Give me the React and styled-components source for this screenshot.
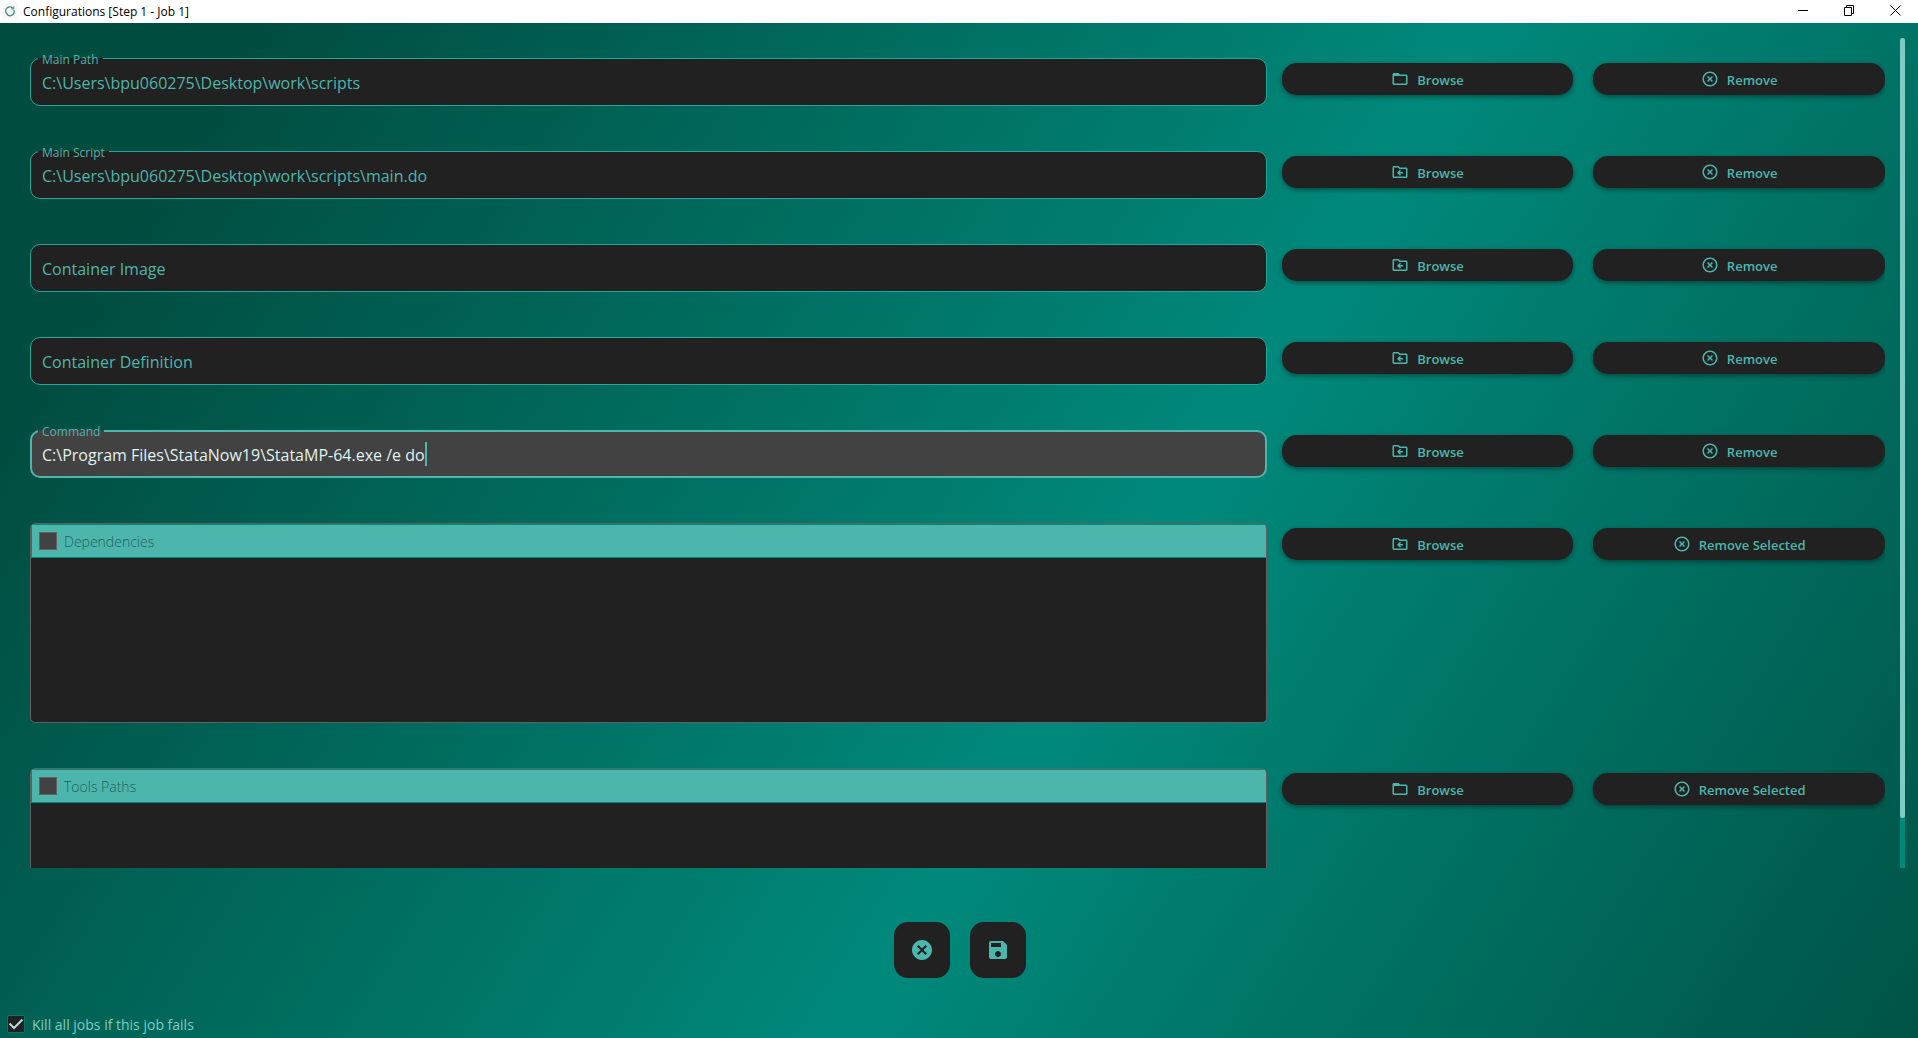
import React, { useState } from 'react';
import styled, { createGlobalStyle } from 'styled-components';
import {
  MdFolderOpen,
  MdOutlineDriveFileMoveRtl,
  MdHighlightOff,
  MdCancel,
  MdSave,
} from 'react-icons/md';

const GlobalStyle = createGlobalStyle`
  * { box-sizing: border-box; }
  body {
    margin: 0;
    font-family: "Open Sans", "Noto Sans", sans-serif;
    background: #004d40;
  }
  button, input { font-family: inherit; }
`;

const Window = styled.div`
  display: flex;
  flex-direction: column;
  height: 100vh;
  overflow: hidden;
`;

const TitleBar = styled.header`
  display: flex;
  align-items: center;
  flex: none;
  height: 23px;
  padding: 0 17px 2px 2px;
  background: #fff;
  color: #000;
`;

const AppIcon = styled.svg`
  width: 16px;
  height: 16px;
  margin-right: 5px;
  background: #f9f9f9;
`;

const Title = styled.h1`
  flex: 1;
  margin: 0;
  padding-top: 2px;
  font-size: 12px;
  line-height: 16px;
  font-weight: 400;
`;

const WindowControls = styled.div`
  display: flex;
  gap: 35px;
`;

const WindowButton = styled.button`
  display: flex;
  padding: 0;
  border: 0;
  background: none;
  color: #000;
`;

const Page = styled.main`
  display: flex;
  flex-direction: column;
  flex: 1;
  min-height: 0;
  padding: 15px 13px 4px 30px;
  background: linear-gradient(122deg, #004d40 10%, #00897b 58%, #004d40 105%);
`;

const ScrollArea = styled.div`
  display: flex;
  flex: 1;
  min-height: 0;
  gap: 15px;
`;

const Rows = styled.div`
  display: flex;
  flex-direction: column;
  flex: 1;
  gap: 45px;
  padding: 20px 0;
  overflow-y: auto;
  scrollbar-width: none;
`;

const Track = styled.div`
  display: flex;
  flex-direction: column;
  flex: none;
  width: 5px;
  background: #00897b;
`;

const Thumb = styled.div`
  flex: 0 0 94%;
  border-radius: 3px;
  background: #80cbc4;
`;

const Row = styled.div`
  display: grid;
  grid-template-columns: 2fr 1fr;
  flex: none;
  align-items: start;
`;

const Actions = styled.div`
  display: grid;
  grid-template-columns: 1fr 1fr;
  gap: 20px;
  padding: 5px 0 0 15px;
`;

const Field = styled.div`
  position: relative;
`;

const FieldInput = styled.input`
  display: block;
  width: 100%;
  height: 48px;
  padding: ${(p) => (p.$focused ? '2px 10px 0' : '2px 11px 0')};
  border: ${(p) => (p.$focused ? '2px solid #4db6ac' : '1px solid #26a69a')};
  border-radius: 10px;
  outline: none;
  background: ${(p) => (p.$focused ? '#424242' : '#212121')};
  color: ${(p) => (p.$focused ? '#e0f2f1' : '#4db6ac')};
  font-size: 16px;
  line-height: 24px;
  &::placeholder { color: #4db6ac; opacity: 1; }
`;

const FieldLabel = styled.label`
  position: absolute;
  top: 0;
  left: 8px;
  padding: 0 4px;
  font-size: 12px;
  line-height: 4px;
  color: #4db6ac;
  background: ${(p) => (p.$focused ? '#424242' : '#212121')};
`;

const Caret = styled.span`
  position: absolute;
  top: 12px;
  left: 12px;
  display: flex;
  height: 24px;
  font-size: 16px;
  pointer-events: none;
  border-right: 2px solid #4db6ac;
`;

const CaretText = styled.span`
  visibility: hidden;
  white-space: pre;
`;

const ActionButton = styled.button`
  display: flex;
  align-items: center;
  justify-content: center;
  gap: 8px;
  height: 32px;
  padding: 0 12px;
  border: 0;
  border-radius: 15px;
  background: #212121;
  color: #4db6ac;
  font-size: 13px;
  line-height: 20px;
  font-weight: 600;
  box-shadow: 0 2px 5px rgba(0, 0, 0, 0.4);
  svg { flex: none; }
`;

const Caption = styled.span`
  padding-top: 2px;
`;

const ListTable = styled.table`
  width: 100%;
  height: 200px;
  border: 1px solid #616161;
  border-radius: 5px;
  border-spacing: 0;
  background: #212121;
  overflow: hidden;
`;

const HeadCell = styled.th`
  height: 34px;
  padding: 0 7px;
  border: 1px solid #00897b;
  border-right-width: 0;
  background: #4db6ac;
  text-align: left;
`;

const BodyCell = styled.td`
  padding: 0;
`;

const CheckLabel = styled.label`
  display: flex;
  align-items: center;
  gap: 7px;
  font-size: 14px;
  line-height: 18px;
  font-weight: ${(p) => (p.$light ? 300 : 400)};
  color: ${(p) => (p.$light ? '#1f5f59' : '#80cbc4')};
`;

const CheckBox = styled.input`
  appearance: none;
  width: 18px;
  height: 18px;
  margin: 0;
  border: 1px solid #616161;
  background: #424242;
  &:checked {
    border-color: #00796b;
    border-radius: 2px;
    background: #212121 url("data:image/svg+xml,%3Csvg xmlns='http://www.w3.org/2000/svg' viewBox='0 0 16 16'%3E%3Cpath d='M1.5 7.5l4.5 4.5 8.500-8.500' fill='none' stroke='%23b2dfdb' stroke-width='2'/%3E%3C/svg%3E") center / 16px no-repeat;
  }
`;

const Toolbar = styled.div`
  display: flex;
  justify-content: center;
  flex: none;
  gap: 20px;
  padding: 54px 0 36px;
  margin-right: 15px;
`;

const SquareButton = styled.button`
  display: flex;
  align-items: center;
  justify-content: center;
  width: 56px;
  height: 56px;
  padding: 0;
  border: 0;
  border-radius: 14px;
  background: #212121;
  color: #4db6ac;
`;

const Footer = styled.footer`
  flex: none;
  margin-left: -23px;
`;

function TextField({ id, label, value = '', focused = false }) {
  const [text, setText] = useState(value);
  return (
    <Field>
      <FieldInput
        id={id}
        value={text}
        placeholder={value ? undefined : label}
        aria-label={label}
        $focused={focused}
        onChange={(e) => setText(e.target.value)}
      />
      {value && <FieldLabel htmlFor={id} $focused={focused}>{label}</FieldLabel>}
      {focused && <Caret aria-hidden="true"><CaretText>{text}</CaretText></Caret>}
    </Field>
  );
}

function ListField({ id, label }) {
  return (
    <ListTable>
      <thead>
        <tr>
          <HeadCell scope="col">
            <CheckLabel htmlFor={id} $light>
              <CheckBox type="checkbox" id={id} />
              <Caption>{label}</Caption>
            </CheckLabel>
          </HeadCell>
        </tr>
      </thead>
      <tbody>
        <tr><BodyCell /></tr>
      </tbody>
    </ListTable>
  );
}

const rows = [
  { id: 'main-path', label: 'Main Path', value: 'C:\\Users\\bpu060275\\Desktop\\work\\scripts', folder: true },
  { id: 'main-script', label: 'Main Script', value: 'C:\\Users\\bpu060275\\Desktop\\work\\scripts\\main.do' },
  { id: 'container-image', label: 'Container Image' },
  { id: 'container-definition', label: 'Container Definition' },
  { id: 'command', label: 'Command', value: 'C:\\Program Files\\StataNow19\\StataMP-64.exe /e do', focused: true },
  { id: 'dependencies', label: 'Dependencies', list: true },
  { id: 'tools-paths', label: 'Tools Paths', list: true, folder: true },
];

export default function App() {
  const [kill, setKill] = useState(true);
  return (
    <Window>
      <GlobalStyle />
      <TitleBar>
        <AppIcon viewBox="0 0 16 16" fill="none" stroke="#3f8f8a" strokeWidth="1.4" aria-hidden="true">
          <path d="M11.800 7A4 4 0 0 1 4.800 10.800A4 4 0 0 1 10.800 5.200" />
          <path d="M11.800 3.500v2.500h-2.500" strokeWidth="1" />
        </AppIcon>
        <Title>Configurations [Step 1 - Job 1]</Title>
        <WindowControls>
          <WindowButton type="button" aria-label="Minimize">
            <svg width="11" height="11" stroke="currentColor"><path d="M0 5.500h10" /></svg>
          </WindowButton>
          <WindowButton type="button" aria-label="Restore">
            <svg width="11" height="11" fill="none" stroke="currentColor">
              <path d="M.5 2.500h7v8h-7zM2.500 2.500v-2h7v8h-2" />
            </svg>
          </WindowButton>
          <WindowButton type="button" aria-label="Close">
            <svg width="11" height="11" stroke="currentColor"><path d="M.5 .5l10 10M10.500 .5l-10 10" /></svg>
          </WindowButton>
        </WindowControls>
      </TitleBar>
      <Page>
        <ScrollArea>
          <Rows>
            {rows.map((r) => (
              <Row key={r.id}>
                {r.list ? <ListField {...r} /> : <TextField {...r} />}
                <Actions>
                  <ActionButton type="button">
                    {r.folder ? <MdFolderOpen size={18} /> : <MdOutlineDriveFileMoveRtl size={18} />}
                    <Caption>Browse</Caption>
                  </ActionButton>
                  <ActionButton type="button">
                    <MdHighlightOff size={18} />
                    <Caption>{r.list ? 'Remove Selected' : 'Remove'}</Caption>
                  </ActionButton>
                </Actions>
              </Row>
            ))}
          </Rows>
          <Track><Thumb /></Track>
        </ScrollArea>
        <Toolbar>
          <SquareButton type="button" aria-label="Cancel"><MdCancel size={24} /></SquareButton>
          <SquareButton type="button" aria-label="Save"><MdSave size={24} /></SquareButton>
        </Toolbar>
        <Footer>
          <CheckLabel htmlFor="kill-all">
            <CheckBox type="checkbox" id="kill-all" checked={kill} onChange={(e) => setKill(e.target.checked)} />
            <Caption>Kill all jobs if this job fails</Caption>
          </CheckLabel>
        </Footer>
      </Page>
    </Window>
  );
}
